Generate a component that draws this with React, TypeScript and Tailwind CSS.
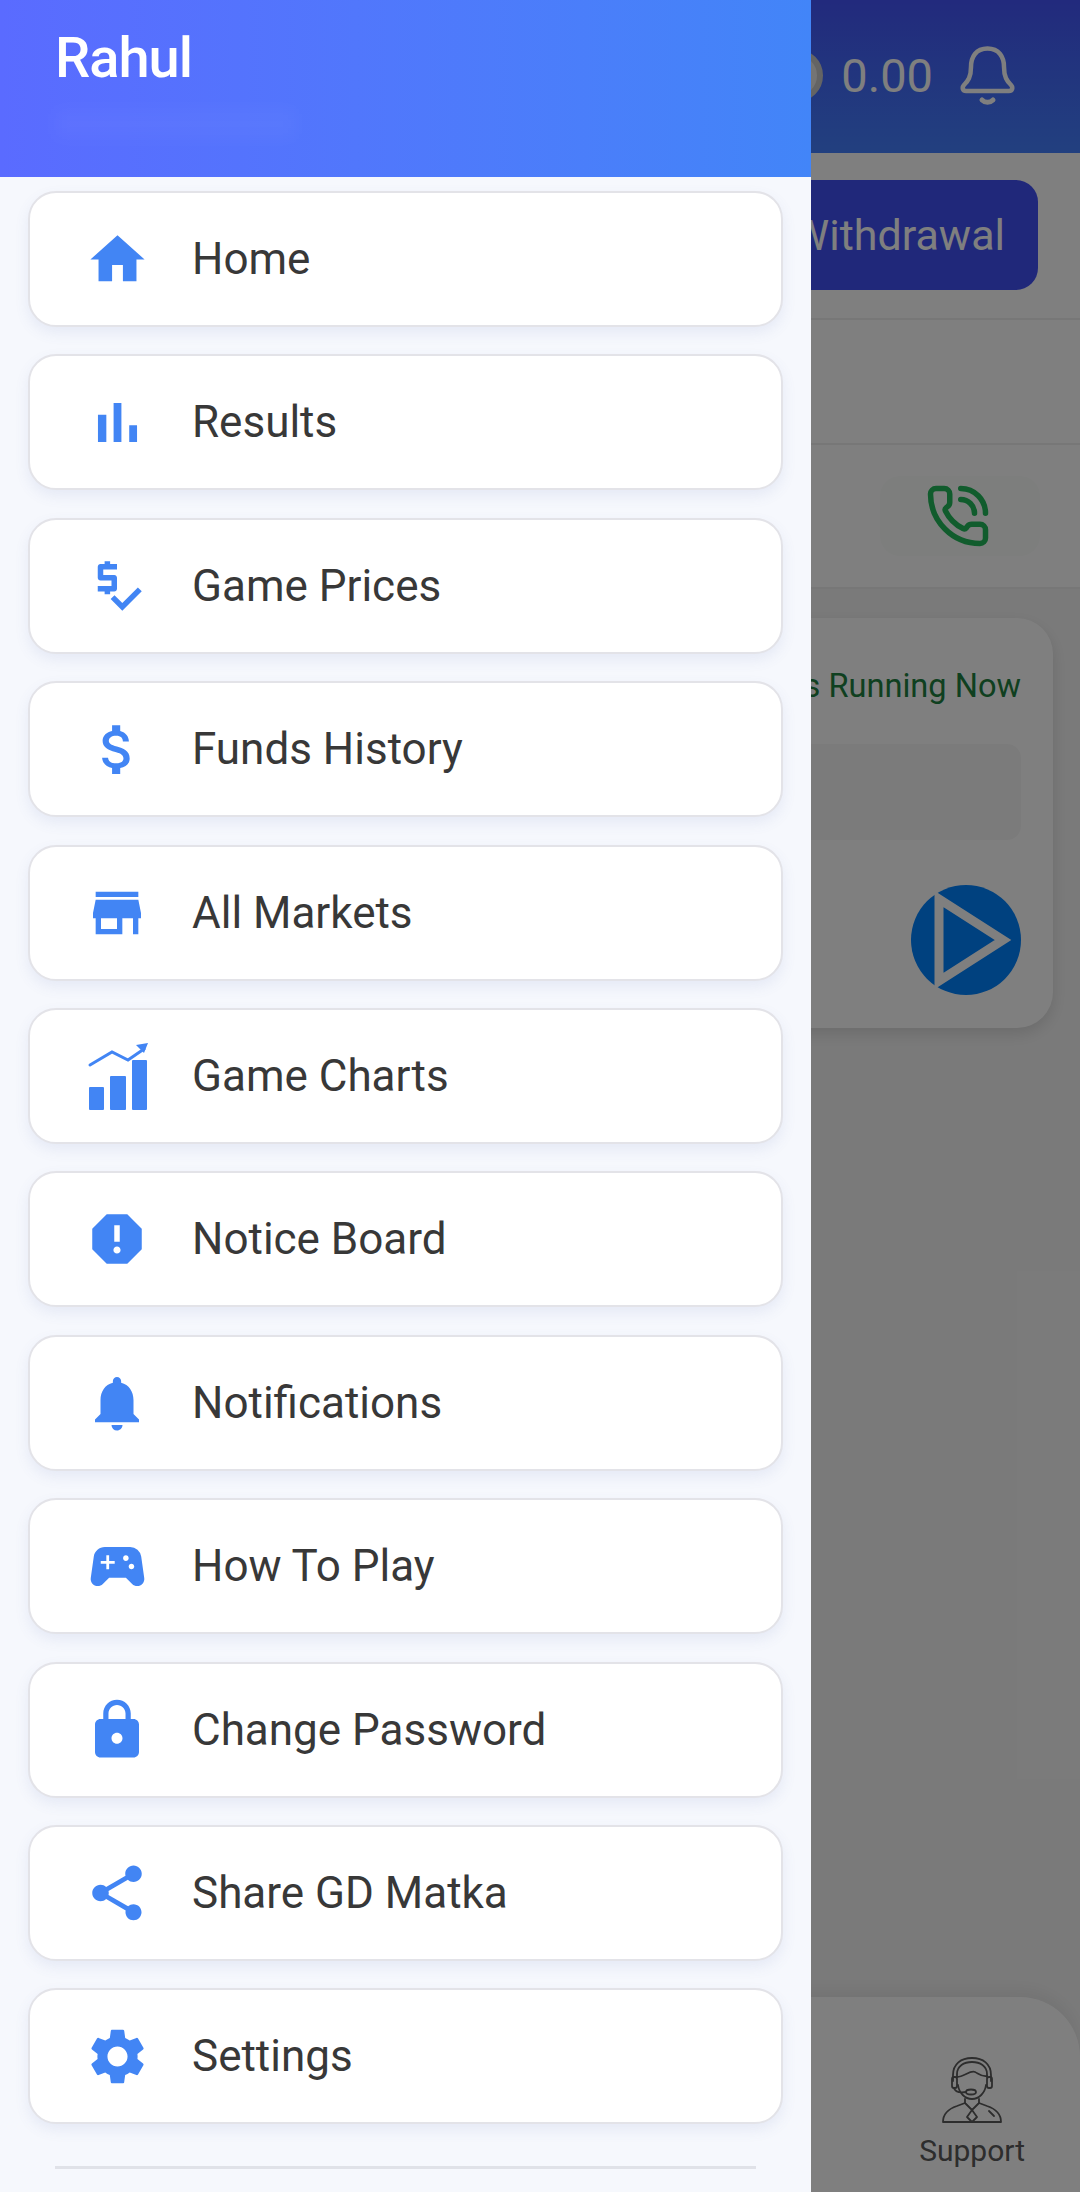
import type { ReactNode } from "react"
import {
  MdAttachMoney,
  MdHome,
  MdLock,
  MdNotifications,
  MdPriceCheck,
  MdReport,
  MdSettings,
  MdShare,
  MdSportsEsports,
  MdStore,
} from "react-icons/md"
import { PhoneCall } from "lucide-react"

const BarsIcon = () => (
  <svg viewBox="0 0 24 24" width={67} height={67} fill="#4285f4">
    <path d="M5 9.2h3V19H5zM10.6 5h2.8v14h-2.8zm5.6 8H19v6h-2.8z" />
  </svg>
)

const ChartIcon = () => (
  <svg viewBox="0 0 64 70" className="w-16 h-[70px] overflow-visible" fill="#4285f4">
    <rect x="4" y="46" width="15" height="23" rx="1" />
    <rect x="25" y="35" width="16" height="34" rx="1" />
    <rect x="47" y="19" width="15" height="50" rx="1" />
    <path d="M5 24 L27 11 L43 19 L59 8" fill="none" stroke="#4285f4" strokeWidth="3" strokeLinecap="round" />
    <path d="M51 4 L63 2 L59 12 Z" />
  </svg>
)

const menu: { label: string; icon: ReactNode }[] = [
  { label: "Home", icon: <MdHome size={65} /> },
  { label: "Results", icon: <BarsIcon /> },
  { label: "Game Prices", icon: <MdPriceCheck size={66} /> },
  { label: "Funds History", icon: <MdAttachMoney size={65} /> },
  { label: "All Markets", icon: <MdStore size={64} /> },
  { label: "Game Charts", icon: <ChartIcon /> },
  { label: "Notice Board", icon: <MdReport size={66} /> },
  { label: "Notifications", icon: <MdNotifications size={66} /> },
  { label: "How To Play", icon: <MdSportsEsports size={67} /> },
  { label: "Change Password", icon: <MdLock size={66} /> },
  { label: "Share GD Matka", icon: <MdShare size={66} /> },
  { label: "Settings", icon: <MdSettings size={67} /> },
]

const Bell = () => (
  <svg viewBox="0 0 55 59" className="w-[55px] h-[59px]" fill="none" stroke="white" strokeWidth="4.5" strokeLinecap="round" strokeLinejoin="round">
    <path d="M27.5 2.5 C16 2.5 11 11 11 21 C11 31 8 35 4 39 C1.5 42 3 45 6 45 L49 45 C52 45 53.5 42 51 39 C47 35 44 31 44 21 C44 11 39 2.5 27.5 2.5 Z" />
    <path d="M22 54 C25 57 30 57 33 54" strokeWidth="5" />
  </svg>
)

const SupportIcon = () => (
  <svg viewBox="0 0 60 66" className="w-[60px] h-[66px]" fill="none" stroke="#5a5a5a" strokeWidth="1.8" strokeLinecap="round" strokeLinejoin="round">
    <path d="M11 24 V18 C11 7 19 1 30 1 C41 1 49 7 49 18 V24" />
    <path d="M15 20 V17 C15 9 22 5 30 5 C38 5 45 9 45 17 V20" />
    <rect x="10" y="20" width="5" height="11" rx="2" />
    <rect x="45" y="20" width="5" height="11" rx="2" />
    <path d="M15 20 C22 20 28 13 33 15 C37 17 40 20 45 19" />
    <path d="M16 28 C17 36 23 42 30 42 C37 42 43 36 44 28" />
    <path d="M12 31 C13 35 17 36 24 35" />
    <ellipse cx="29" cy="35" rx="5" ry="2.5" />
    <path d="M23 42 V46 L30 53 L37 46 V42" />
    <path d="M23 46 L15 49 C6 52 1 58 1 65 H59 C59 58 54 52 45 49 L37 46" />
    <path d="M30 53 L25 60 L30 65 L35 60 Z" />
    <path d="M47 54 L52 59" />
  </svg>
)

export default function App() {
  return (
    <div className="relative w-[1080px] h-[2192px] overflow-hidden bg-[#f5f5f5] font-['Roboto',sans-serif]">
      {/* page behind the drawer */}
      <div className="flex flex-col h-full">
        <div className="h-[153px] flex items-center justify-end pr-[65px] pb-[2px] bg-gradient-to-b from-[#4454fa] to-[#4480ff] text-white">
          <div className="w-[53px] h-[53px] rounded-full bg-[#e8e8e8] border-[6px] border-[#c8c8c8] flex items-center justify-center">
            <div className="w-7 h-9 rounded-full bg-[#222]"></div>
          </div>
          <span className="ml-[18px] text-[47px] leading-none">0.00</span>
          <div className="ml-[27px]">
            <Bell />
          </div>
        </div>
        <div className="h-[167px] shrink-0 bg-white border-b-2 border-[#eeeeee] flex justify-end pt-[27px] pr-[42px]">
          <div className="w-[420px] h-[110px] rounded-[22px] bg-[#4050f5] text-white text-[43px] flex items-center justify-end pr-[33px]">
            Withdrawal
          </div>
        </div>
        <div className="h-[125px] shrink-0 bg-white border-b-2 border-[#eeeeee]"></div>
        <div className="h-[144px] shrink-0 bg-white border-b-2 border-[#eeeeee] flex items-center justify-end pr-[40px]">
          <div className="w-[160px] h-[80px] rounded-[20px] bg-[#fbfdfb] flex items-center justify-center pr-[4px]">
            <PhoneCall size={66} color="#22b85a" strokeWidth={2} />
          </div>
        </div>
        <div className="mt-[29px] ml-[27px] mr-[27px] h-[410px] rounded-[36px] bg-white shadow-[0_6px_16px_rgba(0,0,0,0.12)] pl-[32px] pr-[32px] pt-[50px]">
          <div className="text-right text-[32.6px] leading-[36px] text-[#1e8040] whitespace-nowrap">Games Running Now</div>
          <div className="mt-[40px] h-[96px] rounded-[14px] bg-[#f7f7f7]"></div>
          <div className="mt-[45px] flex justify-end">
            <svg viewBox="0 0 110 110" className="w-[110px] h-[110px]">
              <circle cx="55" cy="55" r="55" fill="#0082ff" />
              <path d="M28 14 L92 55 L28 96 Z" fill="none" stroke="white" strokeWidth="9" strokeLinejoin="miter" />
            </svg>
          </div>
        </div>
        <div className="mt-auto h-[195px] rounded-tr-[60px] bg-white shadow-[0_-8px_16px_rgba(0,0,0,0.06)] flex justify-end pr-[55px] pt-[60px]">
          <div className="flex flex-col items-center">
            <SupportIcon />
            <span className="mt-[10px] text-[30px] leading-[36px] text-[#5a5a5a]">Support</span>
          </div>
        </div>
      </div>

      {/* scrim */}
      <div className="absolute inset-0 bg-black/50"></div>

      {/* drawer */}
      <div className="absolute inset-y-0 left-0 w-[811px] bg-[#f6f8fd] overflow-hidden">
        <div className="relative h-[177px] bg-gradient-to-r from-[#5a6bff] to-[#4285f8] pl-[55px] pt-[25px]">
          <div className="text-[56px] leading-[66px] font-medium text-white tracking-[-1px]">Rahul</div>
          <div className="mt-[18px] w-[240px] h-[30px] bg-white/[0.03] blur-sm"></div>
        </div>
        <div className="px-[28px] pt-[14px]">
          {menu.map((item) => (
            <div
              key={item.label}
              className="h-[136px] mb-[27.4px] rounded-[28px] bg-white border-2 border-[#e3e3e8] shadow-[0_6px_14px_rgba(90,110,180,0.1)] flex items-center pl-[55px] gap-[43px]"
            >
              <div className="w-16 h-16 flex items-center justify-center text-[#4285f4] shrink-0 [&>svg]:shrink-0">{item.icon}</div>
              <span className="text-[44px] leading-none text-[#383838] whitespace-nowrap">{item.label}</span>
            </div>
          ))}
          <div className="mx-[27px] mt-[42px] h-[3px] bg-[#e0e2e8]"></div>
        </div>
      </div>
    </div>
  )
}
